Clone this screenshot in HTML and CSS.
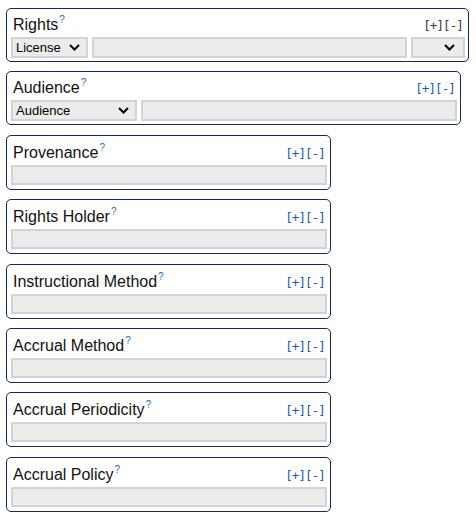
FILE: index.html
```html
<!DOCTYPE html>
<html>
<head>
<meta charset="utf-8">
<link rel="stylesheet" href="styles.css">
</head>
<body>
<div class="box box-wide">
  <div class="head"><span class="title">Rights<sup class="q">?</sup></span><span class="ctl ctl-dark">[+][-]</span></div>
  <div class="row">
    <div class="sel sel-license"><span>License</span><svg class="chev" width="11" height="7" viewBox="0 0 11 7"><polyline points="1,1 5.5,5.5 10,1" fill="none" stroke="#000" stroke-width="2"/></svg></div>
    <div class="inp grow"></div>
    <div class="sel sel-small"><span></span><svg class="chev" width="11" height="7" viewBox="0 0 11 7"><polyline points="1,1 5.5,5.5 10,1" fill="none" stroke="#000" stroke-width="2"/></svg></div>
  </div>
</div>
<div class="box box-mid">
  <div class="head"><span class="title">Audience<sup class="q">?</sup></span><span class="ctl">[+][-]</span></div>
  <div class="row">
    <div class="sel sel-aud"><span>Audience</span><svg class="chev" width="11" height="7" viewBox="0 0 11 7"><polyline points="1,1 5.5,5.5 10,1" fill="none" stroke="#000" stroke-width="2"/></svg></div>
    <div class="inp grow"></div>
  </div>
</div>
<div class="box">
  <div class="head"><span class="title">Provenance<sup class="q">?</sup></span><span class="ctl">[+][-]</span></div>
  <div class="row"><div class="inp grow"></div></div>
</div>
<div class="box">
  <div class="head"><span class="title">Rights Holder<sup class="q">?</sup></span><span class="ctl">[+][-]</span></div>
  <div class="row"><div class="inp grow"></div></div>
</div>
<div class="box">
  <div class="head"><span class="title">Instructional Method<sup class="q">?</sup></span><span class="ctl">[+][-]</span></div>
  <div class="row"><div class="inp grow"></div></div>
</div>
<div class="box">
  <div class="head"><span class="title">Accrual Method<sup class="q">?</sup></span><span class="ctl">[+][-]</span></div>
  <div class="row"><div class="inp grow"></div></div>
</div>
<div class="box">
  <div class="head"><span class="title">Accrual Periodicity<sup class="q">?</sup></span><span class="ctl">[+][-]</span></div>
  <div class="row"><div class="inp grow"></div></div>
</div>
<div class="box">
  <div class="head"><span class="title">Accrual Policy<sup class="q">?</sup></span><span class="ctl">[+][-]</span></div>
  <div class="row"><div class="inp grow"></div></div>
</div>
</body>
</html>
```
FILE: styles.css
```css
html, body { background: #fff; }
body {
  margin: 8px 6px;
  font-family: "Liberation Sans", Arial, sans-serif;
  color: #111;
}
.box {
  box-sizing: border-box;
  width: 325px;
  height: 55px;
  border: 1px solid #0f2a6a;
  border-radius: 5px;
  padding: 0 3px 0 4px;
  margin-bottom: 9.4px;
}
.box-wide { width: 463px; height: 54px; }
.box-mid { width: 455px; height: 54px; }
.head {
  display: flex;
  justify-content: space-between;
  align-items: baseline;
  height: 29px;
  padding-top: 8px;
  padding-left: 2px;
  box-sizing: border-box;
}
.box-wide .head, .box-mid .head { height: 28px; padding-top: 7px; }
.title {
  font-size: 16px;
  line-height: 18px;
  color: #111;
}
.q {
  font-size: 10px;
  color: #1f6fb0;
  vertical-align: 0;
  position: relative;
  top: -7px;
  margin-left: 1px;
}
.ctl {
  font-family: "DejaVu Sans Mono", monospace;
  font-size: 12.5px;
  letter-spacing: -0.9px;
  color: #1d5c9c;
  padding-right: 2px;
}
.ctl-dark { color: #3a3a3a; }
.row {
  display: flex;
  gap: 4px;
}
.inp, .sel {
  box-sizing: border-box;
  height: 20px;
  border: 2px solid #d3d3d3;
  background: #ececec;
}
.box-wide .inp, .box-wide .sel, .box-mid .inp, .box-mid .sel { height: 21px; }
.grow { flex: 1; }
.sel {
  display: flex;
  align-items: center;
  justify-content: space-between;
  font-size: 13px;
  color: #000;
  padding: 0 6px 0 3px;
}
.sel-license { width: 77px; }
.sel-aud { width: 126px; }
.sel-small { width: 54px; padding-right: 8px; }
.chev { display: block; }
```
